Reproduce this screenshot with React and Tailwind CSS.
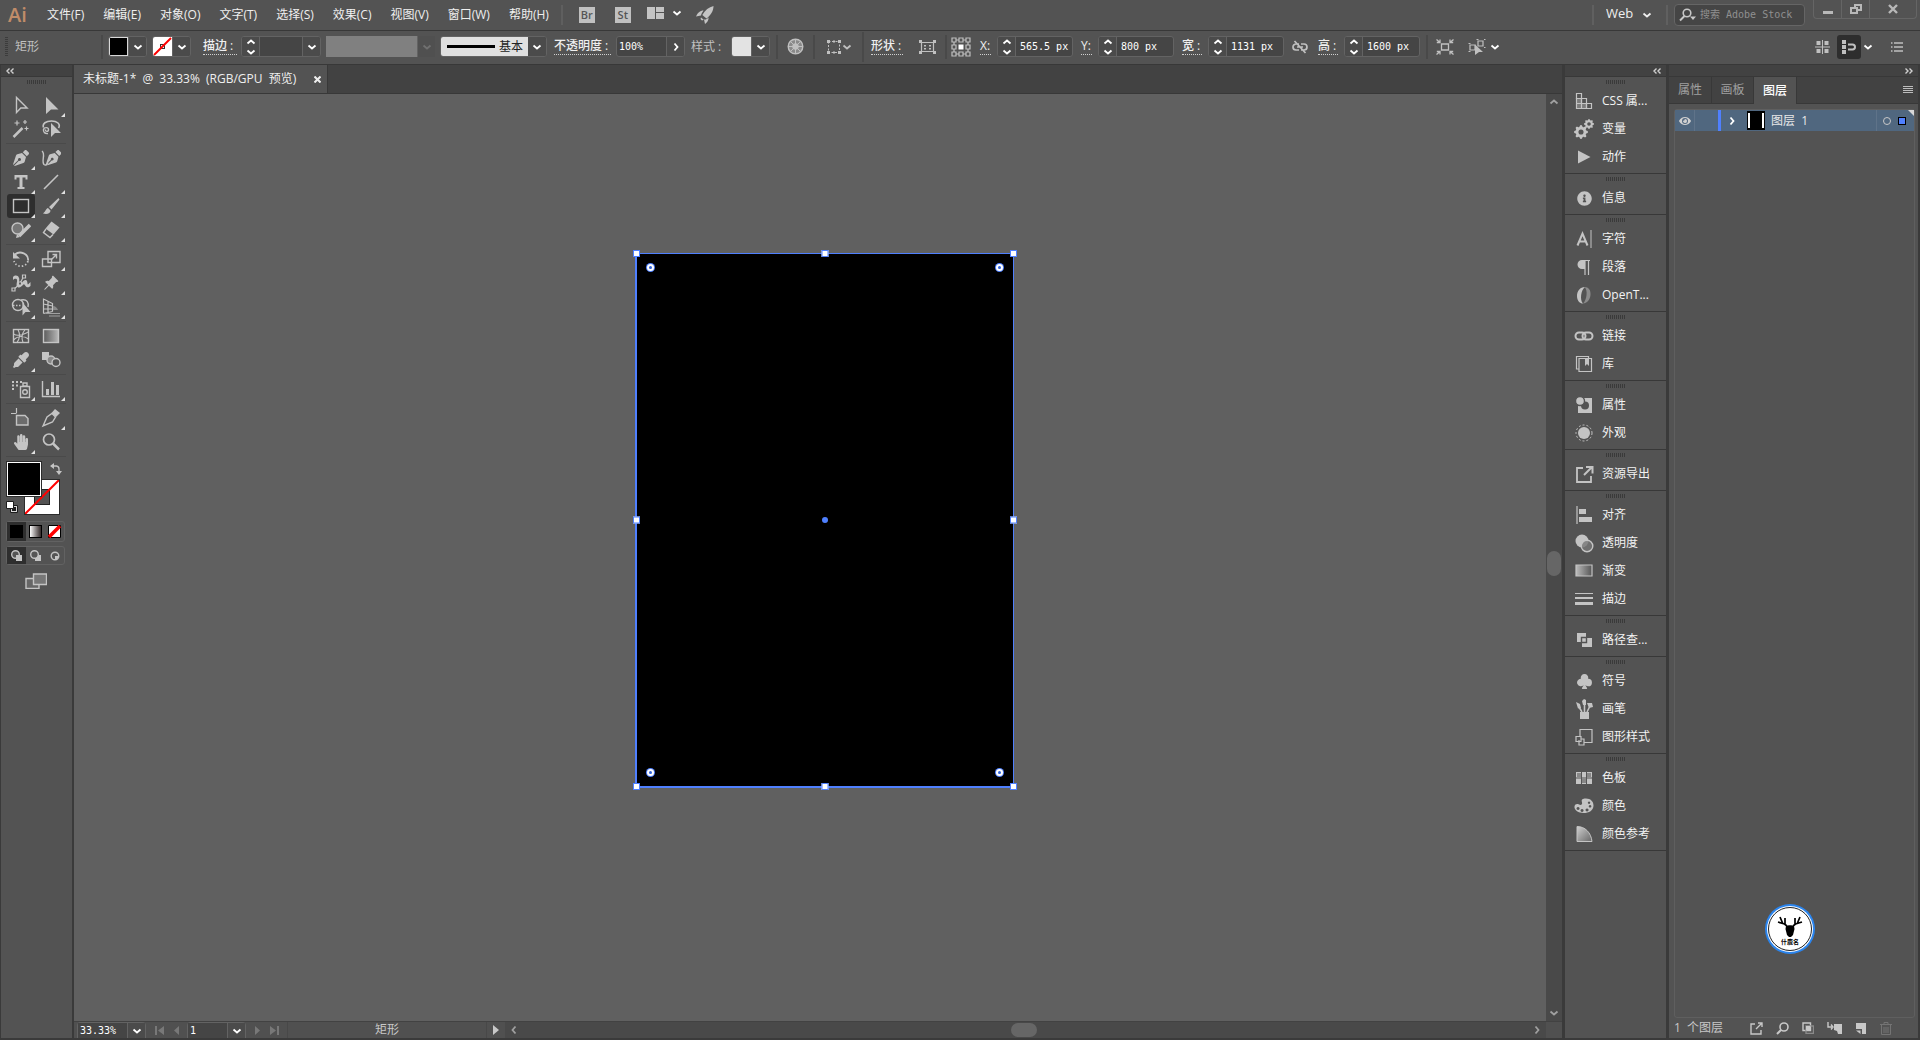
import React from "react";
import { FaPenNib, FaHandPaper, FaEyeDropper, FaInfoCircle, FaEye } from "react-icons/fa";
import { BsPinAngleFill, BsSuitClubFill, BsGearFill } from "react-icons/bs";

/* ---------- small shared pieces ---------- */

function Svg({ w = 20, h = 20, className = "", children }) {
  return (
    <svg width={w} height={h} viewBox={`0 0 ${w} ${h}`} fill="none" stroke="currentColor" strokeWidth="1.4" className={`shrink-0 ${className}`} aria-hidden="true">
      {children}
    </svg>
  );
}

const solid = { fill: "currentColor", stroke: "none" };

function Chevron({ dir = "down", className = "" }) {
  const d = {
    down: "M1.5 3.5 5 6.5 8.5 3.5",
    up: "M1.5 6.5 5 3.5 8.5 6.5",
    right: "M3.5 1.5 6.5 5 3.5 8.5",
    left: "M6.5 1.5 3.5 5 6.5 8.5",
  }[dir];
  return (
    <svg width="10" height="10" viewBox="0 0 10 10" fill="none" stroke="currentColor" strokeWidth="1.8" className={`shrink-0 ${className}`} aria-hidden="true">
      <path d={d} />
    </svg>
  );
}

function Double({ dir }) {
  return (
    <svg width="8" height="6" viewBox="0 0 8 6" fill="none" stroke="#d0d0d0" strokeWidth="1.4" aria-hidden="true">
      <path d={dir === "left" ? "M3.5 .5 1 3 3.5 5.5M7.5 .5 5 3 7.5 5.5" : "M.5 .5 3 3 .5 5.5M4.5 .5 7 3 4.5 5.5"} />
    </svg>
  );
}

function Grip() {
  return (
    <svg width="20" height="4" viewBox="0 0 20 4" stroke="#3a3a3a" strokeWidth="1" aria-hidden="true">
      <path d="M.5 0v4M2.5 0v4M4.5 0v4M6.5 0v4M8.5 0v4M10.5 0v4M12.5 0v4M14.5 0v4M16.5 0v4M18.5 0v4" />
    </svg>
  );
}

/* ---------- menu bar ---------- */

const menus = ["文件(F)", "编辑(E)", "对象(O)", "文字(T)", "选择(S)", "效果(C)", "视图(V)", "窗口(W)", "帮助(H)"];

function MenuBar() {
  return (
    <header className="flex h-[31px] shrink-0 items-center border-b border-[#383838] bg-[#535353] pl-2">
      <div className="w-[31px] text-[20px] leading-5 font-semibold text-[#c08c69]">Ai</div>
      <nav className="flex gap-[3px]">
        {menus.map((m) => (
          <button key={m} className="px-2 leading-5 whitespace-nowrap text-[#efefef]">{m}</button>
        ))}
      </nav>
      <div className="ml-1 h-5 w-0.5 bg-[#5f5f5f]" />
      <button className="ml-4 size-4 bg-[#c0c0c0] text-[11px] leading-4 font-semibold text-[#555]">Br</button>
      <button className="ml-5 size-4 bg-[#c0c0c0] text-[11px] leading-4 font-semibold text-[#555]">St</button>
      <button aria-label="排列文档" className="ml-4 flex items-center gap-2 pb-1 text-[#c4c4c4]">
        <Svg w={17} h={12}><path {...solid} d="M0 0h8v12H0zM9 0h8v5H9zM9 6h8v6H9z" /></Svg>
        <Chevron className="text-white" />
      </button>
      <button aria-label="GPU 性能" className="ml-3.5 text-[#c4c4c4]">
        <Svg w={18} h={18}>
          <path {...solid} d="M17.5 0C13 1 9 4 6.300 9L10.500 12.500C15 9 17.500 5 17.500 0ZM7.500 4.500C4 4.500 1.500 7 0 10.500L5 9.500C5.500 7.500 6.500 6 7.500 4.500ZM12.500 11.200C13 14 11 16.500 9 18L8 13.500 9.800 13.500C11 13 12 12 12.500 11.200ZM5 11.500 7.800 13.800 6 14.500 4.500 13Z" />
        </Svg>
      </button>
      <div className="ml-auto flex h-full items-center">
        <div className="h-5 w-0.5 bg-[#606060]" />
        <label className="relative flex items-center text-[#efefef]">
          <select aria-label="工作区" className="w-[66px] appearance-none bg-transparent pb-1 pl-3 text-[13px] leading-5 outline-none"><option>Web</option></select>
          <Chevron className="pointer-events-none absolute right-2" />
        </label>
        <div className="mx-1.5 h-5 w-0.5 bg-[#606060]" />
        <label className="mr-2 flex h-[22px] w-[131px] items-center gap-1 rounded border border-[#656565] bg-[#454545] px-1 text-[#c8c8c8]">
          <Svg w={17} h={14}><circle cx="8" cy="5" r="3.800" strokeWidth="1.600" /><path d="M5.500 8 1 12.500" strokeWidth="2" /><path {...solid} d="M11 8.500h6L14 12z" /></Svg>
          <input aria-label="搜索" placeholder="搜索 Adobe Stock" className="w-full min-w-0 bg-transparent font-[DejaVu_Sans_Mono,Noto_Sans_CJK_SC,monospace] text-[10px] leading-4 outline-none placeholder:text-[#909090]" />
        </label>
        <div className="mr-[3px] flex h-[19px] self-start rounded-b border border-t-0 border-[#656565] text-[#b8b8b8]">
          <button aria-label="最小化" className="grid w-7 place-items-center border-r border-[#656565]"><Svg w={10} h={12}><path {...solid} d="M0 8h10v3H0z" /></Svg></button>
          <button aria-label="还原" className="grid w-7 place-items-center border-r border-[#656565]"><Svg w={12} h={12}><path strokeWidth="2" d="M1 5h6v5H1zM5 4V2h6v5H8" /></Svg></button>
          <button aria-label="关闭" className="grid w-[46px] place-items-center"><Svg w={10} h={10}><path strokeWidth="2.400" d="m1 1 8 8M9 1 1 9" /></Svg></button>
        </div>
      </div>
    </header>
  );
}

/* ---------- options bar ---------- */

const box = "flex h-[21px] shrink-0 items-stretch overflow-hidden rounded-[3px] border border-[#636363] bg-[#454545]";

function Divider({ className = "" }) {
  return <div className={`h-6 w-0.5 shrink-0 bg-[#494949] ${className}`} />;
}

function Drop({ dir = "down", label, disabled }) {
  return (
    <button aria-label={label} disabled={disabled} className="grid w-[18px] shrink-0 place-items-center border-l border-[#636363] bg-[#4b4b4b] text-white disabled:bg-[#505050] disabled:text-[#707070]">
      <Chevron dir={dir} />
    </button>
  );
}

function Spinner() {
  return (
    <span className="flex w-[18px] shrink-0 flex-col items-center justify-between border-r border-[#636363] bg-[#4b4b4b] text-white">
      <button aria-label="增加" className="h-2.5"><Chevron dir="up" /></button>
      <button aria-label="减少" className="h-2.5"><Chevron /></button>
    </span>
  );
}

function Underlined({ children, className = "" }) {
  return <span className={`shrink-0 border-b border-dotted border-[#d0d0d0] leading-4 font-medium whitespace-nowrap text-[#efefef] ${className}`}>{children}</span>;
}

function NumberField({ label, value, wide }) {
  return (
    <label className="flex shrink-0 items-center">
      <Underlined className={wide}>{label}</Underlined>
      <span className={`ml-1.5 w-[76px] ${box}`}>
        <Spinner />
        <input defaultValue={value} className="w-full min-w-0 bg-transparent pl-1 font-[DejaVu_Sans_Mono,monospace] text-[10px] text-white outline-none" />
      </span>
    </label>
  );
}

function OptionsBar() {
  return (
    <div className="flex h-[34px] shrink-0 items-center overflow-hidden border-b border-[#383838] bg-[#535353] pb-0.5 text-[#c0c0c0]">
      <svg width="3" height="20" viewBox="0 0 3 20" stroke="#3c3c3c" className="ml-[5px] shrink-0" aria-hidden="true"><path d="M0 .5h3M0 2.500h3M0 4.500h3M0 6.500h3M0 8.500h3M0 10.500h3M0 12.500h3M0 14.500h3M0 16.500h3M0 18.500h3" /></svg>
      <span className="ml-[7px] w-[86px] shrink-0">矩形</span>
      <Divider className="mr-[5px]" />
      <span className={`w-[39px] ${box}`}>
        <button aria-label="填色" className="w-5 border border-[#d8d8d8] bg-black" />
        <Drop label="填色选项" />
      </span>
      <span className={`ml-[5px] w-[39px] ${box}`}>
        <button aria-label="描边颜色" className="w-5 bg-white">
          <svg width="19" height="19" viewBox="0 0 19 19" fill="none" aria-hidden="true"><rect x="7.500" y="7.500" width="4" height="4" stroke="#333" /><path d="M1 18 18 1" stroke="#f00" strokeWidth="2" /></svg>
        </button>
        <Drop label="描边颜色选项" />
      </span>
      <label className="ml-3 flex shrink-0 items-center">
        <Underlined className="w-[34px]">描边 :</Underlined>
        <span className={`ml-1 w-[80px] ${box}`}><Spinner /><input aria-label="描边粗细" className="w-full min-w-0 bg-transparent outline-none" /><Drop label="描边粗细选项" /></span>
      </label>
      <span className="ml-[5px] flex h-[21px] w-[109px] shrink-0">
        <span className="grow bg-[#808080]" />
        <Drop disabled label="变量宽度" />
      </span>
      <label className={`relative ml-[5px] w-[107px] ${box}`}>
        <span className="flex grow items-center bg-[#e0e0e0] pl-1.5"><span className="h-[3px] w-12 bg-black" /></span>
        <select aria-label="画笔定义" className="absolute inset-0 appearance-none bg-transparent pl-[58px] text-[#222] outline-none"><option>基本</option></select>
        <span className="pointer-events-none grid w-[18px] place-items-center bg-[#4b4b4b] text-white"><Chevron /></span>
      </label>
      <label className="ml-[7px] flex shrink-0 items-center">
        <Underlined className="w-[57px]">不透明度 :</Underlined>
        <span className={`ml-[5px] w-[69px] ${box}`}><input defaultValue="100%" className="w-full min-w-0 bg-transparent pl-0.5 font-[DejaVu_Sans_Mono,monospace] text-[10px] text-white outline-none" /><Drop dir="right" label="不透明度选项" /></span>
      </label>
      <span className="ml-1.5 w-10 shrink-0">样式 :</span>
      <span className={`w-[39px] ${box}`}><button aria-label="图形样式" className="w-5 bg-[#e3e3e3]" /><Drop label="样式选项" /></span>
      <Divider className="ml-1.5" />
      <button aria-label="重新着色图稿" className="ml-[9px]">
        <Svg w={17} h={17}><circle cx="8.500" cy="8.500" r="7.300" fill="#8a8a8a" /><circle cx="8.500" cy="8.500" r="2.500" /><path strokeWidth="1" d="M8.500 1v15M1 8.500h15M3.200 3.200l10.600 10.600M13.800 3.200 3.200 13.800" /></Svg>
      </button>
      <Divider className="ml-[9px]" />
      <button aria-label="对齐" className="ml-[11px] flex items-center">
        <Svg w={16} h={16}><path strokeDasharray="2 1.500" strokeWidth="1" d="M2.500 2.500h11v11h-11z" /><path {...solid} d="M1 1h3v3H1zM12 1h3v3h-3zM1 12h3v3H1zM12 12h3v3h-3zM7 1.500h2v2H7zM7 12.500h2v2H7z" /></Svg>
        <Chevron />
      </button>
      <div className="ml-2.5 h-[30px] w-0.5 shrink-0 bg-[#494949]" />
      <Underlined className="ml-[7px] w-8">形状 :</Underlined>
      <button aria-label="形状属性" className="ml-4">
        <Svg w={17} h={14}><path strokeWidth="1.200" d="M2.500 2.500h12v9h-12z" /><path {...solid} d="M0 0h3v3H0zM14 0h3v3h-3zM0 11h3v3H0zM14 11h3v3h-3zM5 5h2v1.500H5zM10 5h2v1.500h-2zM5 8h2v1.500H5zM10 8h2v1.500h-2z" /></Svg>
      </button>
      <Divider className="ml-[9px]" />
      <button aria-label="参考点" className="mx-1">
        <Svg w={20} h={20}><path strokeWidth="1.200" d="M1 1h4v4H1zM8 1h4v4H8zM15 1h4v4h-4zM1 8h4v4H1zM15 8h4v4h-4zM1 15h4v4H1zM8 15h4v4H8zM15 15h4v4h-4zM5 3h3M12 3h3M5 17h3M12 17h3M3 5v3M3 12v3M17 5v3M17 12v3" /><path {...solid} fill="#fff" d="M7.500 7.500h5v5h-5z" /></Svg>
      </button>
      <div className="ml-[5px] flex shrink-0 items-center gap-2">
        <NumberField label="X:" value="565.5 px" wide="w-[11px]" />
        <NumberField label="Y:" value="800 px" wide="w-[11px]" />
        <NumberField label="宽 :" value="1131 px" wide="w-5" />
        <button aria-label="约束宽高比例"><Svg w={16} h={14}><path strokeWidth="1.700" d="M7 4H4a3 3 0 0 0 0 6h3M9 4h3a3 3 0 0 1 0 6H9M5 7h6M2.500 1l11 12" /></Svg></button>
        <span className="ml-0.5"><NumberField label="高 :" value="1600 px" wide="w-5" /></span>
      </div>
      <Divider className="ml-1.5" />
      <button aria-label="隔离选中的对象" className="ml-2"><Svg w={18} h={16}><path strokeWidth="1.300" d="M5.500 5h7v6h-7z" /><path strokeWidth="1.300" d="M.5 .5 4 3.500M4 .5v3H.8M17.500.5 14 3.500M14 .5v3h3.200M.5 15.500 4 12.500M4 15.500v-3H.8M17.500 15.500 14 12.500M14 15.500v-3h3.200" /></Svg></button>
      <button aria-label="选择类似的对象" className="ml-3.5 flex items-center gap-1">
        <Svg w={18} h={16}><path strokeWidth="1.200" d="M2 6h5v5H2zM10 2h5v5h-5z" /><path strokeWidth="1.200" d="M.5 4.500h2M.5 12.500h2M8.500.5h2M16 .5h1.500M16 8.500h1.500" /><path {...solid} d="M7 5.500 15 13h-4l-4 3z" /></Svg>
        <Chevron className="text-white" />
      </button>
      <div className="ml-auto flex items-center pr-[17px]">
        <button aria-label="对齐像素网格"><Svg w={15} h={14}><path {...solid} d="M1.500 1h4v4h-4zM9.500 1h4v4h-4zM1.500 9h4v4h-4zM9.500 9h4v4h-4z" /><path strokeWidth="1" d="M7.500 0v14M0 7h15" /></Svg></button>
        <button aria-label="贴紧像素" className="ml-[7px] grid size-6 place-items-center rounded-[3px] bg-[#2e2e2e]"><Svg w={16} h={14}><path {...solid} d="M1 0h4v4H1zM1 5h4v4H1zM1 10h4v4H1z" /><path strokeWidth="2" d="M7 4.500h4.500a2.500 2.500 0 0 1 0 5H7" /></Svg></button>
        <Chevron className="ml-0.5 text-white" />
        <button aria-label="面板菜单" className="ml-[18px]"><Svg w={12} h={10}><path strokeWidth="1.300" d="M3 1h9M3 5h9M3 9h9M0 1h1.500M0 5h1.500M0 9h1.500" /></Svg></button>
      </div>
    </div>
  );
}

/* ---------- tools ---------- */

const T = {
  select: <Svg><path d="M5.500 2.500v15l4.300-4.500h6.300z" /></Svg>,
  direct: <Svg><path {...solid} d="M5 2v17l5-4.500h7.500z" /></Svg>,
  wand: <Svg><path strokeWidth="2.500" d="m2.500 18 9-9" /><path strokeWidth="1.200" d="M6 1.500v5M3.500 4h5M14 1v4M12 3h4M15.500 7.500v4M13.500 9.500h4" /></Svg>,
  lasso: <Svg><path strokeWidth="1.600" d="M17.500 9C20 5 16 2 10.500 2 5 2 1 4.500 2.500 8.500" /><path d="M7 14.500c-3 .5-5-1.500-4.500-4S7.500 8 7.500 10.500 4 13 4.500 10.500" /><path {...solid} d="M10 4v14l4-4h6z" /></Svg>,
  pen: <FaPenNib size={16} />,
  curve: <Svg><path d="M1 3c4 3-1 10 2 13.500 2 1.500 3.500-.5 4-2" /><g transform="translate(5 2) scale(.03)"><path {...solid} d="M136.600 138.790a64.003 64.003 0 0 0-43.310 41.350L0 460l14.690 14.690L164.800 324.580c-2.990-6.260-4.800-13.180-4.800-20.580 0-26.510 21.490-48 48-48s48 21.490 48 48-21.490 48-48 48c-7.400 0-14.320-1.810-20.580-4.800L37.310 497.310 52 512l279.860-93.290a64.003 64.003 0 0 0 41.350-43.310L416 224 288 96l-151.400 42.790zm361.340-64.620-60.110-60.110c-18.750-18.750-49.160-18.750-67.910 0l-56.550 56.550 128.020 128.020 56.550-56.550c18.750-18.760 18.750-49.160 0-67.910z" /></g></Svg>,
  type: <Svg><path {...solid} d="M3.500 3h13v4.500h-2V5.500h-3v9.500h2V17h-7v-2h2V5.500h-3v2h-2z" /></Svg>,
  line: <Svg><path d="m3 17 14-14" strokeWidth="1.600" /></Svg>,
  rect: <Svg><rect x="2.500" y="3.500" width="15" height="13" /></Svg>,
  brush: <Svg><path {...solid} d="M17.500 2 8 11l2.500 2.500L18.500 3.500zM7 12c-2 .5-2 3-5 5.500 4 1.200 7.500 0 7.500-3z" /></Svg>,
  shaper: <Svg><circle cx="6.500" cy="8.500" r="5.500" fill="#777" /><path strokeWidth="3.500" d="m8 16 11-11" /><path {...solid} d="m5 18 1-4 3 3z" /></Svg>,
  eraser: <Svg><path {...solid} d="m10.500 1.500 8 6-6 7-8-6z" /><path d="m5 9-2.500 3.500 6.500 5 3-3" /></Svg>,
  rotate: <Svg><path d="M4 5.500c5-4.500 14-.5 13 6" strokeWidth="1.800" /><path strokeDasharray="1.500 2" strokeWidth="1.800" d="M17 12c-2 7-12 7-14 0" /><path {...solid} d="M2 3v6.500h7z" /></Svg>,
  scale: <Svg><path d="M7 2.500h12v11H7zM1.500 10h9v7.500h-9z" /><path d="m10 11 5-5M11.500 5.500h4v4" /></Svg>,
  width: <Svg><path {...solid} d="M2 4c2-2 5-2 6 1 1 2-1 5 1 6 2 .5 3-5 6-4 2 1 1 4 2 4.500L19.500 9v4c-2 2-4 1.500-5 0-1-1-1-2-2-1.500-2 2-4 4-6 2.500-2-2 0-5-.5-7S3 6 2 7z" /><path strokeWidth="1.200" d="M2 16.500C7 14 10 9 13 3" /><path fill="#535353" strokeWidth="1.200" d="M1 15h3v3H1zM7.500 9h3v3h-3zM11.500 2h3v3h-3z" /></Svg>,
  pin: <BsPinAngleFill size={16} />,
  builder: <Svg><circle cx="7" cy="8" r="5.500" /><path d="M10 3c6-1.500 8 3 7 7" /><path strokeDasharray="1.500 1.500" d="M2 8.500h9" /><path {...solid} d="M11.500 5.500v13l3-3.500h5z" /></Svg>,
  perspective: <Svg><path d="M2.500 1.500v15M2.500 2l9 4.500v8M2.500 7l9 2M2.500 12l9 0M2.500 16.500l9-2M7 4v12" strokeWidth="1.200" /><path {...solid} fill="#8a8a8a" d="M12 9c2 0 4 1.500 5 4h-5z" /><path stroke="#a0a0a0" strokeWidth="1.200" d="M5 16.500h14M8 19h11" /></Svg>,
  mesh: <Svg><rect x="2.500" y="3.500" width="15" height="13" /><path strokeWidth="1.100" d="M6 16.500c3-4 3-9 1-13M12 16.500c-2-5-1-9 2-13M2.500 8c5 3 10 0 15-2M2.500 14c5-5 11-4 15-1" /></Svg>,
  gradient: <Svg><defs><linearGradient id="gt"><stop stopColor="#b0b0b0" stopOpacity="0.100" /><stop offset="1" stopColor="#b8b8b8" /></linearGradient></defs><rect x="2.500" y="3.500" width="15" height="13" fill="url(#gt)" /></Svg>,
  dropper: <FaEyeDropper size={16} />,
  blend: <Svg><path {...solid} d="M1 2h7v8H1z" /><circle cx="10" cy="10" r="4" fill="#888" /><circle cx="15" cy="12.500" r="4" fill="#535353" /></Svg>,
  spray: <Svg><path d="M9.500 7.500h9v11h-9zM12 4h4v3h-4z" /><circle cx="14" cy="13" r="2.300" /><path {...solid} d="M1 2h2v2H1zM5 2h2v2H5zM9 2h2v2H9zM1 5.500h2v2H1zM5 5.500h2v2H5zM1 9h2v2H1z" /></Svg>,
  graph: <Svg><path d="M1.500 2v15.500H19" /><path {...solid} d="M5 10h3v6H5zM10 3h3v13h-3zM15 6h3v10h-3z" /></Svg>,
  artboard: <Svg><path strokeWidth="1.200" d="M5.500 0v5M0 5.500h5.500" /><path fill="#6c6c6c" d="M5.500 7.500h8.500l3 3v6.500H5.500z" /></Svg>,
  slice: <Svg><path d="m2 18 4-9 5-3.500 3.500 3.500-3 5z" /><path {...solid} d="m10.500 5 3.500-4 5 4-4 4z" /></Svg>,
  hand: <FaHandPaper size={16} />,
  zoom: <Svg><circle cx="8" cy="7.500" r="5.500" strokeWidth="1.700" /><path d="m12 11.500 6 6" strokeWidth="2.500" /></Svg>,
};

const toolGroups = [
  [["select", "选择"], ["direct", "直接选择", 1], ["wand", "魔棒"], ["lasso", "套索"]],
  [["pen", "钢笔", 1], ["curve", "曲率"], ["type", "文字", 1], ["line", "直线段", 1], ["rect", "矩形", 1], ["brush", "画笔", 1], ["shaper", "Shaper", 1], ["eraser", "橡皮擦", 1]],
  [["rotate", "旋转", 1], ["scale", "比例缩放", 1], ["width", "宽度", 1], ["pin", "操控变形", 1], ["builder", "形状生成器", 1], ["perspective", "透视网格", 1]],
  [["mesh", "网格"], ["gradient", "渐变"], ["dropper", "吸管", 1], ["blend", "混合"]],
  [["spray", "符号喷枪", 1], ["graph", "柱形图", 1]],
  [["artboard", "画板"], ["slice", "切片", 1], ["hand", "抓手", 1], ["zoom", "缩放"]],
];

function Tool({ icon, label, more }) {
  const active = icon === "rect";
  return (
    <button aria-label={label} className={`relative grid h-6 w-7 place-items-center rounded-[3px] ${active ? "bg-[#2e2e2e]" : ""}`}>
      {T[icon]}
      {more && <svg width="4" height="4" viewBox="0 0 4 4" className="absolute right-0 bottom-0" aria-hidden="true"><path d="M4 0v4H0z" fill="#e0e0e0" /></svg>}
    </button>
  );
}

function ToolsPanel() {
  return (
    <aside className="flex w-[74px] shrink-0 flex-col border-r-2 border-l border-[#3a3a3a] bg-[#535353]">
      <div className="flex h-3 items-center border-b border-[#383838] bg-[#424242] pl-[5px]"><Double dir="left" /></div>
      <div className="flex justify-center pt-[3px]"><Grip /></div>
      <div className="mt-[9px] px-[5px] text-[#c4c4c4]">
        {toolGroups.map((g, i) => (
          <div key={i} className="mb-0.5 w-[60px] border-b border-[#4a4a4a] pb-0.5 pl-px">
            <div className="grid grid-cols-[30px_29px]">
              {g.map(([icon, label, more]) => <Tool key={icon} icon={icon} label={label} more={more} />)}
            </div>
          </div>
        ))}
        {/* overlapping fill and stroke swatches */}
        <div className="relative mt-1 h-[54px] w-[54px]">
          <button aria-label="描边" className="absolute right-0 bottom-0 size-9 border border-[#2c2c2c] bg-white">
            <svg width="34" height="34" viewBox="0 0 34 34" aria-hidden="true"><rect x="9.500" y="9.500" width="15" height="15" fill="#535353" stroke="#222" /><path d="M0 34 34 0" stroke="#f00" strokeWidth="2" /></svg>
          </button>
          <button aria-label="填色" className="absolute top-0 left-0 size-9 border border-[#2c2c2c] bg-white p-px"><span className="block size-8 bg-black" /></button>
          <button aria-label="互换填色和描边" className="absolute top-0.5 -right-0.5"><Svg w={12} h={12}><path d="M3 3h3.500A3 3 0 0 1 9 6v3" strokeWidth="1.300" /><path {...solid} d="M0 3 4 0v6zM6 8h6l-3 4z" /></Svg></button>
          <button aria-label="默认填色和描边" className="absolute bottom-0.5 left-0"><Svg w={12} h={12}><path stroke="#1c1c1c" fill="#d8d8d8" strokeWidth="1" d="M4.500 4.500h7v7h-7z" /><path fill="#1c1c1c" stroke="none" d="M6 6h4v4H6z" /><path stroke="#1c1c1c" fill="#fff" strokeWidth="1" d="M.5 .5h7v7h-7z" /></Svg></button>
        </div>
        <div className="mt-1.5 flex h-[21px] w-[59px] items-center rounded-[3px] border border-[#626262]">
          <button aria-label="颜色" className="grid h-full w-[19px] place-items-center bg-[#2e2e2e]"><span className="size-[13px] bg-black" /></button>
          <button aria-label="渐变" className="grid w-5 place-items-center"><span className="size-[13px] border border-black bg-linear-to-r from-white to-[#332b2b]" /></button>
          <button aria-label="无" className="grid w-[19px] place-items-center"><svg width="13" height="13" viewBox="0 0 13 13" aria-hidden="true"><path d="M.5.5h12v12H.5z" fill="#fff" stroke="#000" /><path d="m1 12 11-11" stroke="#f00" strokeWidth="3.500" /></svg></button>
        </div>
        <div className="mt-1 flex h-[19px] w-[59px] items-center rounded-[3px] border border-[#626262]">
          <button aria-label="正常绘图" className="grid h-full w-[19px] place-items-center bg-[#2e2e2e]"><Svg w={11} h={11}><circle cx="4.500" cy="4.500" r="3.800" fill="#555" /><path {...solid} d="M5 5h6v6H5z" /></Svg></button>
          <button aria-label="背面绘图" className="grid w-5 place-items-center"><Svg w={11} h={11}><path {...solid} d="M5 5h6v6H5z" /><circle cx="4.500" cy="4.500" r="3.800" fill="#555" /></Svg></button>
          <button aria-label="内部绘图" className="grid w-[19px] place-items-center"><Svg w={10} h={10}><circle cx="5" cy="5" r="3.800" fill="#555" /><path {...solid} d="M5 5h4L7 8.500H5z" /></Svg></button>
        </div>
        <button aria-label="更改屏幕模式" className="mt-2 ml-[19px]"><Svg w={22} h={16}><path d="M1 5.500h13v10H1z" fill="#666" /><path fill="#777" d="M8.500 1h13v10.500h-13z" /></Svg></button>
      </div>
    </aside>
  );
}

/* ---------- document ---------- */

const handles = [
  "-top-1 -left-1", "-top-1 left-1/2 -translate-x-1/2", "-top-1 -right-1",
  "top-1/2 -left-1 -translate-y-1/2", "top-1/2 -right-1 -translate-y-1/2",
  "-bottom-1 -left-1", "-bottom-1 left-1/2 -translate-x-1/2", "-bottom-1 -right-1",
];
const corners = ["top-2.5 left-2.5", "top-2.5 right-2.5", "bottom-2.5 left-2.5", "right-2.5 bottom-2.5"];

function Artboard() {
  return (
    <div className="absolute top-[159px] left-[561px] h-[535px] w-[379px] border-t border-r border-b-2 border-l-2 border-[#4f80ff] bg-black">
      {handles.map((p) => <span key={p} className={`absolute size-[7px] border border-[#4f80ff] bg-white ${p}`} />)}
      {corners.map((p) => (
        <span key={p} className={`absolute grid size-[7px] place-items-center rounded-full bg-white ring-1 ring-[#4f80ff] ${p}`}><span className="size-[3px] rounded-full bg-[#2f62d8]" /></span>
      ))}
      <span className="absolute top-1/2 left-1/2 size-1.5 -translate-1/2 rounded-sm bg-[#4f80ff]" />
    </div>
  );
}

function StatusBar() {
  const field = "w-full min-w-0 bg-[#454545] font-[DejaVu_Sans_Mono,monospace] text-[10px] text-white outline-none";
  return (
    <footer className="flex h-[17px] shrink-0 items-stretch border-t border-[#424242] bg-[#505050] text-[#c8c8c8]">
      <span className="ml-[3px] flex w-[69px] shrink-0 rounded-t border border-b-0 border-[#636363]"><input aria-label="缩放比例" defaultValue="33.33%" className={`${field} pl-0.5`} /><Drop label="缩放选项" /></span>
      <span className="flex w-[41px] shrink-0 items-center justify-center gap-2.5 text-[#787878]">
        <button aria-label="首个画板"><Svg w={9} h={9}><path {...solid} d="M0 0h2v9H0zM9 0v9L3 4.500z" /></Svg></button>
        <button aria-label="上一个画板"><Svg w={5} h={9}><path {...solid} d="M5 0v9L0 4.500z" /></Svg></button>
      </span>
      <span className="flex w-[59px] shrink-0 rounded-t border border-b-0 border-[#636363]"><input aria-label="画板" defaultValue="1" className={`${field} pl-0.5`} /><Drop label="画板选项" /></span>
      <span className="flex w-[41px] shrink-0 items-center justify-center gap-2.5 text-[#787878]">
        <button aria-label="下一个画板"><Svg w={5} h={9}><path {...solid} d="M0 0v9l5-4.500z" /></Svg></button>
        <button aria-label="末个画板"><Svg w={9} h={9}><path {...solid} d="M7 0h2v9H7zM0 0v9l6-4.500z" /></Svg></button>
      </span>
      <span className="w-[200px] shrink-0 border-r border-l border-[#484848] text-center leading-4">矩形</span>
      <button aria-label="状态栏选项" className="grid w-[18px] shrink-0 place-items-center"><Svg w={6} h={10}><path {...solid} d="M0 0v10l6-5z" /></Svg></button>
      <div className="flex grow items-center justify-between bg-[#494949] px-1 text-[#a0a0a0]">
        <Chevron dir="left" />
        <span className="mr-1 h-3.5 w-[26px] rounded-full bg-[#666]" />
        <Chevron dir="right" />
      </div>
      <span className="w-4 shrink-0" />
    </footer>
  );
}

function DocumentArea() {
  return (
    <main className="flex min-w-0 grow flex-col bg-[#535353]">
      <div className="flex h-[29px] shrink-0 border-b border-[#383838] bg-[#424242]">
        <div className="flex w-[254px] items-center justify-between border-r border-[#383838] bg-[#535353] pr-1.5 pl-[9px] whitespace-nowrap text-[#efefef]">
          <span>
            <span className="mr-[3px]">未标题-1*</span> <span className="mr-[3px]">@</span> <span className="mr-[3px]">33.33%</span> <span className="mr-[3px]">(RGB/GPU</span> <span>预览)</span>
          </span>
          <button aria-label="关闭文档"><Svg w={7} h={7}><path d="m.5.5 6 6M6.500.5l-6 6" strokeWidth="2" /></Svg></button>
        </div>
      </div>
      <div className="flex min-h-0 grow">
        <section className="relative grow overflow-hidden bg-[#606060]"><Artboard /></section>
        <div className="flex w-4 shrink-0 flex-col items-center justify-between bg-[#494949] py-[3px] text-[#a0a0a0]">
          <Chevron dir="up" />
          <span className="mt-3 h-[25px] w-3.5 rounded-full bg-[#666]" />
          <Chevron />
        </div>
      </div>
      <StatusBar />
    </main>
  );
}

/* ---------- collapsed panel dock ---------- */

const P = {
  css: <Svg w={18} h={18}><path strokeWidth="1.200" fill="#7c7c7c" d="M1.500 6.500h5v5h-5zM6.500 11.500h5v5h-5zM1.500 11.500h5v5h-5z" /><path strokeWidth="1.200" d="M1.500 1.500h5v5h-5zM6.500 6.500h5v5h-5zM11.500 11.500h5v5h-5z" /></Svg>,
  gears: <span className="relative block size-5"><BsGearFill size={14} className="absolute bottom-0 left-0" /><BsGearFill size={10} className="absolute top-0 right-0" /></span>,
  play: <Svg w={18} h={18}><path {...solid} d="M3 2.500v13L15.500 9z" /></Svg>,
  info: <FaInfoCircle size={15} />,
  char: <Svg w={18} h={18}><path strokeWidth="2" d="m2.500 15.500 5-12 5 12M4.500 11.500h6" /><path strokeWidth="1" d="M16 0v18" /></Svg>,
  para: <Svg w={18} h={18}><path {...solid} d="M10 2H7a4.500 4.500 0 0 0 0 9h3z" /><path strokeWidth="1.200" d="M7 2.500h8M10 2v15M13.500 2v15" /></Svg>,
  open: <Svg w={18} h={18}><path {...solid} d="M10 1C5 1 2 5 2 10s3 7.500 6 7.500C4.500 14 6 4 10 1Z" /><path {...solid} fill="#8a8a8a" d="M9.500 1c4 0 6.500 3 6 8S12 17 8 17.500C12 14 13 4 9.500 1Z" /></Svg>,
  link: <Svg w={20} h={12}><rect x="1.500" y="2.500" width="10" height="7" rx="3.500" strokeWidth="2" /><rect x="8.500" y="2.500" width="10" height="7" rx="3.500" strokeWidth="2" /></Svg>,
  lib: <Svg w={18} h={18}><path strokeWidth="1.200" d="M4 3.500h12.500v13H4zM4 14H1.500V1.500h12v2" /><path {...solid} d="M10 4h4v7l-2-2-2 2z" /></Svg>,
  attr: <Svg w={18} h={18}><path {...solid} d="M3 2h14v15H3z" /><circle cx="10" cy="9.500" r="4" fill="#535353" stroke="none" /><circle cx="5" cy="5" r="4.500" fill="currentColor" stroke="#535353" /></Svg>,
  appear: <Svg w={18} h={18}><circle cx="9" cy="9" r="6" {...solid} /><circle cx="9" cy="9" r="8" strokeDasharray="2 2" strokeWidth="1" /></Svg>,
  exportI: <Svg w={19} h={19}><path strokeWidth="1.800" d="M8 3H2v14h14v-6" /><path strokeWidth="2" d="m9 10 8-8M11 2h6.500v6.500" /></Svg>,
  align: <Svg w={18} h={18}><path strokeWidth="1.200" d="M2 0v18" /><path {...solid} d="M4 3h7v5H4zM4 11h13v5H4z" /></Svg>,
  trans: <Svg w={19} h={19}><circle cx="7" cy="7" r="6.500" {...solid} /><circle cx="12" cy="12" r="5.800" fill="#777" fillOpacity="0.800" /></Svg>,
  grad: <Svg w={18} h={14}><defs><linearGradient id="gp"><stop stopColor="#bbb" /><stop offset="1" stopColor="#555" /></linearGradient></defs><path strokeWidth="1.200" fill="url(#gp)" d="M1 1h16v11H1z" /></Svg>,
  stroke: <Svg w={18} h={14}><path {...solid} d="M0 1h18v1H0zM0 5h18v2H0zM0 10h18v3H0z" /></Svg>,
  path: <Svg w={18} h={18}><path {...solid} d="M2 2h9v9H2zM7 7h10v9H7z" /><path stroke="#535353" fill="currentColor" d="M6.500 6.500h5v5h-5z" /></Svg>,
  club: <BsSuitClubFill size={17} />,
  brushes: <Svg w={18} h={20}><path {...solid} d="M5 13h9v7H5z" /><path strokeWidth="1.600" d="M7 13 4 8M9.500 13V4M12 13l3-6" /><path {...solid} d="M1 3l4 2 1 4-3 .5zM7 2l2-2 2 1v5L8 6zM12 4l5 0 1 4-4 1z" /></Svg>,
  styles: <Svg w={18} h={18}><path strokeWidth="1.200" d="M5 9V1.500h12v13H9" /><path strokeWidth="1.200" d="M1 8.500h5v5H1zM4 12v5h5v-6H6" /></Svg>,
  swatch: <Svg w={18} h={14}><path {...solid} d="M1 1h16v12H1z" /><path fill="#888" stroke="none" d="M2 2h4v4H2zM12 2h4v4h-4zM7 8h4v4H7z" /><path stroke="#555" strokeWidth="1" d="M1 7h16M6.500 1v12M11.500 1v12" /></Svg>,
  palette: <Svg w={20} h={16}><path {...solid} fillRule="evenodd" d="M9 1c6-1.500 10.500 1.500 10.500 6.500S15 15 9.500 15 0 12 .5 8.500C1 6 3 5.500 5 6.500s3.500 0 3-2S7.500 1.500 9 1ZM4 9a1.500 1.500 0 1 0 .1 0ZM8 11a1.500 1.500 0 1 0 .1 0ZM13 10.500a1.500 1.500 0 1 0 .1 0ZM16 7a1.300 1.300 0 1 0 .1 0ZM15 3.500a1.200 1.200 0 1 0 .1 0Z" /></Svg>,
  guide: <Svg w={18} h={18}><defs><linearGradient id="gg" x1="0" y1="0" x2="1" y2="1"><stop stopColor="#d0d0d0" /><stop offset="1" stopColor="#666" /></linearGradient></defs><path strokeWidth="1" fill="url(#gg)" d="M2 1.500c8 0 14 6 15 15H2z" /></Svg>,
};

const dock = [
  [["css", "CSS 属..."], ["gears", "变量"], ["play", "动作"]],
  [["info", "信息"]],
  [["char", "字符"], ["para", "段落"], ["open", "OpenT..."]],
  [["link", "链接"], ["lib", "库"]],
  [["attr", "属性"], ["appear", "外观"]],
  [["exportI", "资源导出"]],
  [["align", "对齐"], ["trans", "透明度"], ["grad", "渐变"], ["stroke", "描边"]],
  [["path", "路径查..."]],
  [["club", "符号"], ["brushes", "画笔"], ["styles", "图形样式"]],
  [["swatch", "色板"], ["palette", "颜色"], ["guide", "颜色参考"]],
];

function Dock() {
  return (
    <aside className="w-[104px] shrink-0 border-l-3 border-[#3a3a3a] bg-[#535353]">
      <div className="flex h-3 items-center justify-end border-b border-[#383838] bg-[#424242] pr-[5px]"><Double dir="left" /></div>
      {dock.map((g, i) => (
        <section key={i} className="border-b border-[#383838] pb-[2px]">
          <div className="flex h-[10px] justify-center pt-[3px]"><Grip /></div>
          {g.map(([icon, label]) => (
            <button key={label} className="flex h-7 w-full items-center gap-2 pl-[9px] whitespace-nowrap text-[#c4c4c4]">
              <span className="grid w-5 place-items-center">{P[icon]}</span>
              <span className="text-[#f2f2f2]">{label}</span>
            </button>
          ))}
        </section>
      ))}
    </aside>
  );
}

/* ---------- layers panel ---------- */

function DeerBadge() {
  return (
    <div className="absolute right-[99px] bottom-[63px] grid size-[50px] place-items-center rounded-full bg-[#2b85ee]">
      <div className="grid size-[46px] place-items-center rounded-full bg-white">
        <div className="flex size-11 flex-col items-center rounded-full border border-[#222] pt-2 text-black">
          <Svg w={26} h={21}>
            <path {...solid} d="M9 10c2-1 6-1 8 0l.5 3L16 19l-2 2h-2l-2-2-1.500-6z" />
            <path strokeWidth="1.700" d="M10 10 7.500 8 1 6M6 8 3 1M8 8V2M16 10l2.500-2L25 6M20 8l3-7M18 8V2" />
          </Svg>
          <span className="mt-px text-[6px] leading-2 font-bold">什鹿名</span>
        </div>
      </div>
    </div>
  );
}

function LayersPanel() {
  return (
    <aside className="flex w-[254px] shrink-0 flex-col border-r-2 border-l-3 border-[#3a3a3a] bg-[#535353]">
      <div className="flex h-3 shrink-0 items-center justify-end border-b border-[#383838] bg-[#424242] pr-[5px]"><Double dir="right" /></div>
      <div role="tablist" className="flex h-[27px] shrink-0 items-stretch bg-[#424242]">
        <button role="tab" className="w-[43px] border-r border-b border-[#383838] text-[#a0a0a0]">属性</button>
        <button role="tab" className="w-[42px] border-r border-b border-[#383838] text-[#a0a0a0]">画板</button>
        <button role="tab" aria-selected="true" className="w-[43px] border-r border-[#383838] bg-[#535353] font-medium text-white">图层</button>
        <div className="flex grow items-center justify-end border-b border-[#383838] pr-[5px]">
          <button aria-label="面板菜单" className="text-[#bdbdbd]"><Svg w={10} h={8}><path strokeWidth="1" d="M0 .5h10M0 2.500h10M0 4.500h10M0 6.500h10" /></Svg></button>
        </div>
      </div>
      <div className="relative mt-[5px] mr-[3px] ml-[5px] grow rounded-[3px] border border-[#5f5f5f]">
        <div className="relative flex h-[21px] items-stretch bg-[#50677f] text-[#e8e8e8]">
          <button aria-label="切换可视性" className="grid w-5 place-items-center border-r border-[#5f7389] text-[#d0d0d0]"><FaEye size={12} /></button>
          <span className="w-[23px]" />
          <span className="w-[3px] bg-[#4f80ff]" />
          <button aria-label="展开图层" className="grid w-[26px] place-items-center pr-1 text-white"><Chevron dir="right" /></button>
          <span className="my-px flex w-[18px] justify-between border border-black bg-black"><span className="my-px w-0.5 bg-white" /><span className="my-px w-0.5 bg-white" /></span>
          <span className="ml-1.5 grow leading-[21px]">图层&nbsp; 1</span>
          <span className="flex w-[38px] items-center gap-[7px] border-l border-[#5f7389] pl-1.5">
            <button aria-label="定位图层" className="size-2 rounded-full border border-[#c8c8c8]" />
            <button aria-label="选择图层" className="size-2 border border-black bg-[#4f80ff]" />
          </span>
          <svg width="6" height="6" viewBox="0 0 6 6" className="absolute top-0 right-0" aria-hidden="true"><path d="M0 0h6v6z" fill="#d8d8d8" /></svg>
        </div>
        <DeerBadge />
      </div>
      <footer className="flex h-5 shrink-0 items-center pl-[5px] text-[#c8c8c8]">
        <span className="grow">1&nbsp; 个图层</span>
        <div className="flex items-center gap-[13px] pr-[26px]">
          <button aria-label="收集以导出"><Svg w={13} h={13}><path d="M5 2H1v10h10V8M6 7l5.500-5.500M8 1h4v4" /></Svg></button>
          <button aria-label="定位对象"><Svg w={13} h={13}><circle cx="8" cy="5" r="4" strokeWidth="1.600" /><path strokeWidth="2" d="m5 8-4 4" /></Svg></button>
          <button aria-label="建立剪切蒙版"><Svg w={12} h={12}><path d="M1 1h7.500v7.500H1z" /><path stroke="#8a8a8a" d="M4 4h7.500v7.500H4z" /><path {...solid} d="M4 4h4.500v4.500H4z" /></Svg></button>
          <button aria-label="创建新子图层"><Svg w={15} h={12}><path d="M1 0v5h4M4 2.500 6 5 4 7.500" /><path {...solid} d="M7 2h8v10h-4l-1-3-3-1z" /></Svg></button>
          <button aria-label="创建新图层"><Svg w={12} h={12}><path {...solid} d="M1 1h10v11H7V7H1zM1 8.500h4.500V12z" /></Svg></button>
          <button aria-label="删除所选图层" disabled className="text-[#747474]"><Svg w={12} h={13}><path strokeWidth="1" d="M0 2.500h12M4 2V.5h4V2M1.500 3v9.500h9V3M4 5v6M6 5v6M8 5v6" /></Svg></button>
        </div>
      </footer>
    </aside>
  );
}

export default function App() {
  return (
    <div className="flex h-screen w-full flex-col overflow-hidden border-b-2 border-[#3a3a3a] bg-[#535353] font-['Open_Sans','Noto_Sans_CJK_SC',sans-serif] text-[12px] leading-4">
      <MenuBar />
      <OptionsBar />
      <div className="flex min-h-0 grow">
        <ToolsPanel />
        <DocumentArea />
        <Dock />
        <LayersPanel />
      </div>
    </div>
  );
}
